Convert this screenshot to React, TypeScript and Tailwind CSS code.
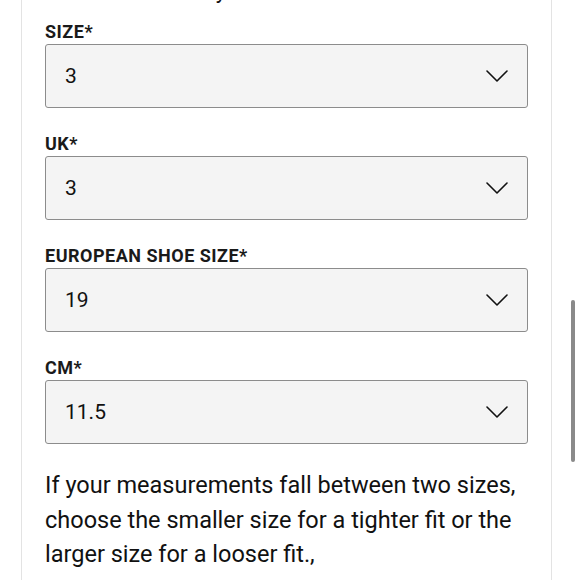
const fields = [
  { label: "SIZE*", value: "3" },
  { label: "UK*", value: "3" },
  { label: "EUROPEAN SHOE SIZE*", value: "19" },
  { label: "CM*", value: "11.5" },
];

function Chevron() {
  return (
    <svg width="22" height="12" viewBox="0 0 22 12" fill="none" className="shrink-0">
      <path d="M1 1 L11 11 L21 1" stroke="#111" strokeWidth="1.6" strokeLinecap="round" strokeLinejoin="round" />
    </svg>
  );
}

function SelectField({ label, value }: { label: string; value: string }) {
  return (
    <div className="flex flex-col">
      <span className="text-[18px] font-bold leading-[24px] tracking-[0.5px] text-[#1a1a1a]">{label}</span>
      <div className="flex h-[64px] items-center justify-between rounded-[3px] border border-[#8c8c8c] bg-[#f4f4f4] pl-[19px] pr-[19px]">
        <span className="mt-[2px] text-[21px] text-[#111]">{value}</span>
        <Chevron />
      </div>
    </div>
  );
}

export default function App() {
  return (
    <div
      className="relative h-[580px] w-[580px] overflow-hidden bg-white"
      style={{ fontFamily: "Roboto, 'Liberation Sans', sans-serif" }}
    >
      <div className="ml-[21px] flex h-full w-[531px] flex-col border-x border-[#e3e3e3] px-[23px]">
        <p className="-mt-[26px] mb-[12px] text-[22px] leading-[34px] text-[#111]">
          Check the sizes by
        </p>
        <div className="flex flex-col gap-[24px]">
          {fields.map((f) => (
            <SelectField key={f.label} label={f.label} value={f.value} />
          ))}
        </div>
        <p className="mt-[24px] text-[23.5px] leading-[34.5px] text-[#111]">
          If your measurements fall between two sizes, choose the smaller size for a tighter fit or the larger size for a looser fit.,
        </p>
      </div>
      <div className="absolute left-[571px] top-[300px] h-[162px] w-[4px] rounded-full bg-[#8a8a8a]" />
    </div>
  );
}
